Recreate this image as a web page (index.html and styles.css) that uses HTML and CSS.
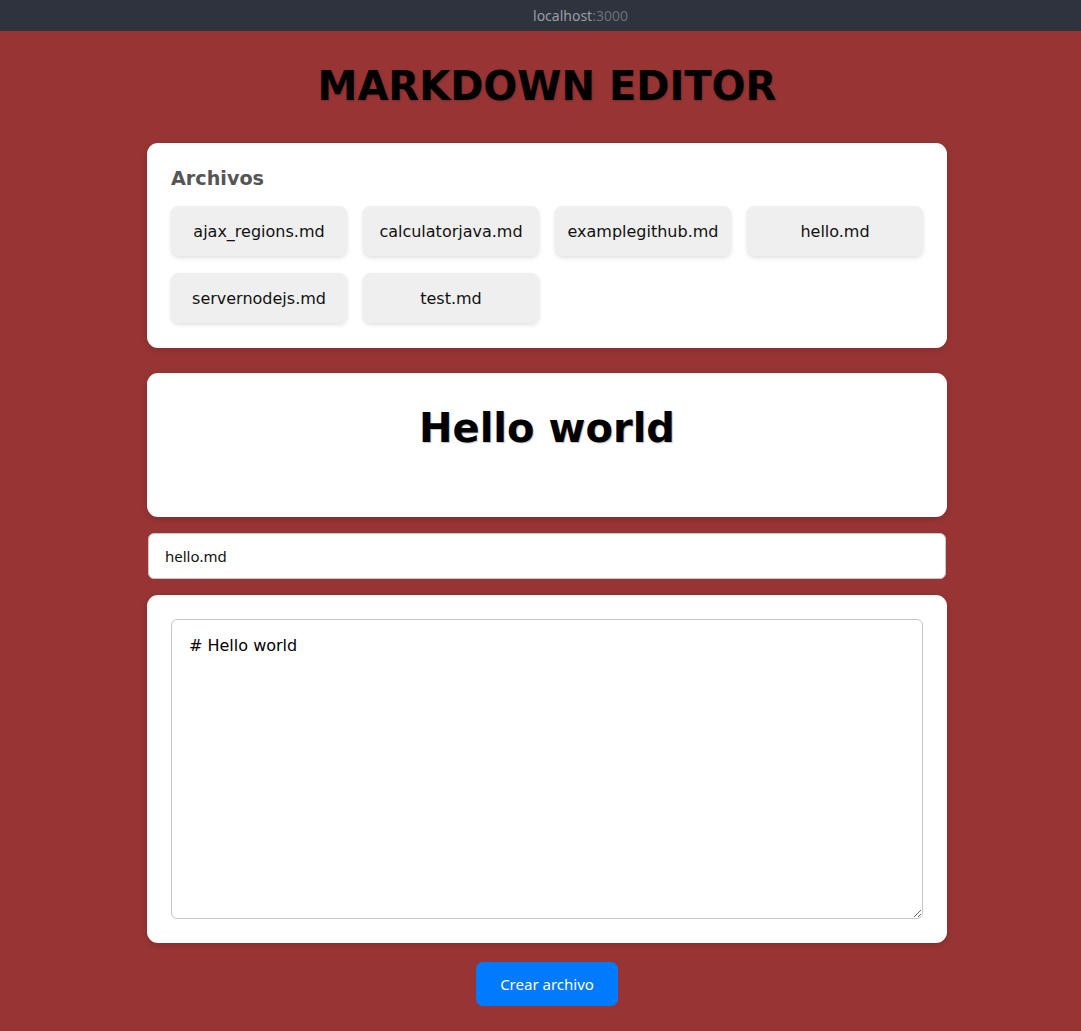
FILE: index.html
```html
<!DOCTYPE html>
<html lang="es">
<head>
<meta charset="utf-8">
<title>Markdown Editor</title>
<link rel="stylesheet" href="styles.css">
</head>
<body>
<div class="urlbar"><span class="host">localhost</span><span class="port">:3000</span></div>
<main class="page">
  <h1 class="title">MARKDOWN EDITOR</h1>
  <section class="card files">
    <h2 class="files-title">Archivos</h2>
    <div class="file-grid">
      <button class="file-btn">ajax_regions.md</button>
      <button class="file-btn">calculatorjava.md</button>
      <button class="file-btn">examplegithub.md</button>
      <button class="file-btn">hello.md</button>
      <button class="file-btn">servernodejs.md</button>
      <button class="file-btn">test.md</button>
    </div>
  </section>
  <section class="card preview">
    <h1 class="preview-h1">Hello world</h1>
  </section>
  <input class="filename" type="text" value="hello.md">
  <section class="card editor">
    <textarea class="source"># Hello world</textarea>
  </section>
  <div class="actions">
    <button class="create">Crear archivo</button>
  </div>
</main>
</body>
</html>
```
FILE: styles.css
```css
* { box-sizing: border-box; }
html, body { margin: 0; padding: 0; }
body {
  background: #983434;
  font-family: "DejaVu Sans", sans-serif;
  color: #000;
}
.urlbar {
  height: 31px;
  background: #2e333d;
  display: flex;
  align-items: center;
  justify-content: center;
  padding-left: 80px;
  font-family: "Noto Sans", "Open Sans", sans-serif;
  font-size: 14px;
}
.host { color: #9a9ea6; }
.port { color: #6c707a; }
.page {
  width: 800px;
  margin: 0 auto;
  position: relative;
  left: 6.5px;
  padding-bottom: 25px;
}
.title {
  font-size: 40px;
  font-weight: bold;
  text-align: center;
  margin: 32px 0 34px;
  line-height: 46px;
  text-shadow: 1px 1px 2px rgba(0,0,0,0.2);
}
.card {
  background: #fff;
  border-radius: 11px;
  box-shadow: 0 2px 6px rgba(0,0,0,0.15);
  padding: 24px;
}
.files { margin-bottom: 25px; padding-bottom: 25px; }
.files-title {
  margin: 0 0 15px;
  font-size: 19.2px;
  line-height: 24px;
  color: #555;
  font-weight: bold;
}
.file-grid {
  display: grid;
  grid-template-columns: repeat(4, 1fr);
  gap: 17px 16px;
}
.file-btn {
  height: 50px;
  border: none;
  border-radius: 8px;
  background: #efefef;
  box-shadow: 0 2px 4px rgba(0,0,0,0.12);
  font-family: "DejaVu Sans", sans-serif;
  font-size: 16px;
  color: #111;
  padding: 0;
}
.preview { padding: 24px 24px 24px; }
.preview-h1 {
  font-size: 40px;
  line-height: 46px;
  text-align: center;
  margin: 8px 0 42px;
  text-shadow: 1px 1px 1px rgba(0,0,0,0.25);
}
.filename {
  display: block;
  width: 798px;
  height: 46px;
  margin: 16px 1px;
  border: 1px solid #c8c8c8;
  border-radius: 6px;
  padding: 0 16px;
  font-family: "Noto Sans", "Open Sans", sans-serif;
  font-size: 15px;
  color: #111;
  background: #fff;
}
.editor { padding: 24px; }
.source {
  display: block;
  width: 100%;
  height: 300px;
  border: 1px solid #c6c6c6;
  border-radius: 6px;
  padding: 17px 17px 16px;
  font-family: "DejaVu Sans", sans-serif;
  font-size: 16px;
  line-height: 18px;
  color: #000;
  resize: vertical;
}
.actions {
  display: flex;
  justify-content: center;
  margin-top: 19px;
}
.create {
  width: 142px;
  height: 44px;
  border: none;
  border-radius: 7px;
  background: #007bff;
  color: #fff;
  font-family: "Noto Sans", "Open Sans", sans-serif;
  font-size: 15px;
  padding: 0;
}
```
